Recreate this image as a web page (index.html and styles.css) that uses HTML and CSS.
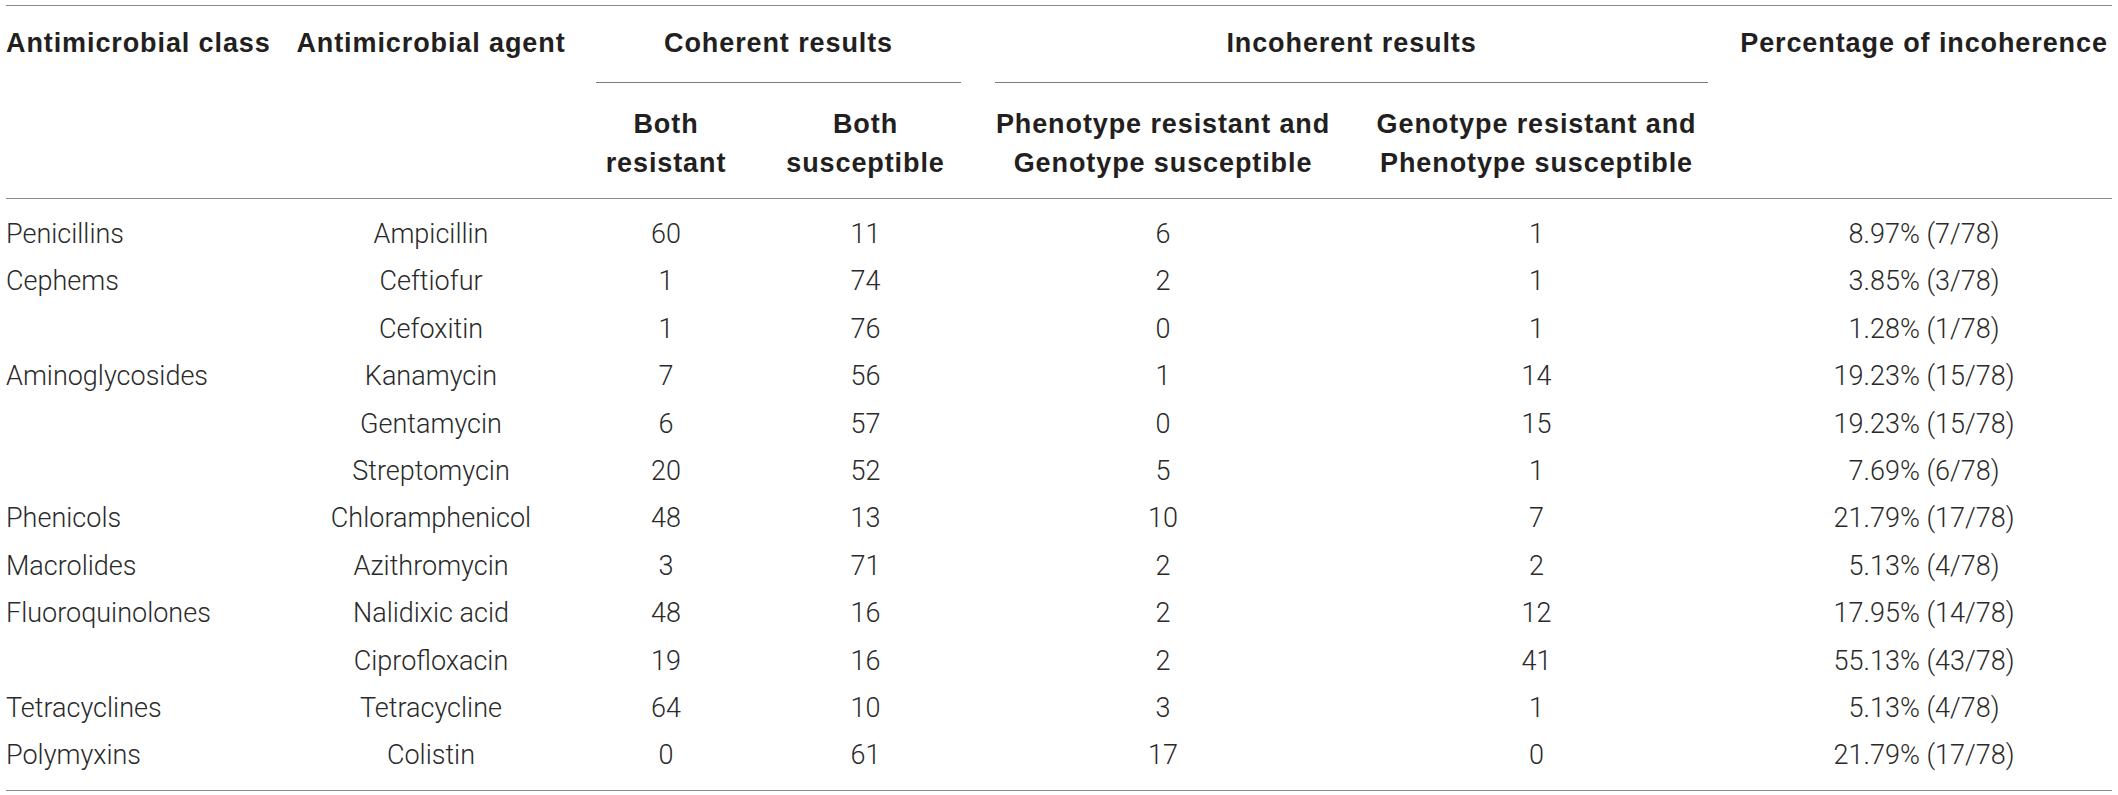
FILE: index.html
```html
<!DOCTYPE html>
<html lang="en">
<head>
<meta charset="utf-8">
<title>Coherence of phenotypic and genotypic resistance</title>
<link rel="stylesheet" href="styles.css">
</head>
<body>
<table class="results">
  <colgroup>
    <col class="c-class">
    <col class="c-agent">
    <col class="c-both-r">
    <col class="c-both-s">
    <col class="c-pheno">
    <col class="c-geno">
    <col class="c-pct">
  </colgroup>
  <thead>
    <tr>
      <th rowspan="2" class="top left">Antimicrobial class</th>
      <th rowspan="2" class="top">Antimicrobial agent</th>
      <th colspan="2" class="group"><span class="group-label">Coherent results</span></th>
      <th colspan="2" class="group"><span class="group-label">Incoherent results</span></th>
      <th rowspan="2" class="top pct">Percentage of incoherence</th>
    </tr>
    <tr>
      <th class="sub">Both<br>resistant</th>
      <th class="sub">Both<br>susceptible</th>
      <th class="sub">Phenotype resistant and<br>Genotype susceptible</th>
      <th class="sub">Genotype resistant and<br>Phenotype susceptible</th>
    </tr>
  </thead>
  <tbody>
    <tr><td class="left">Penicillins</td><td>Ampicillin</td><td>60</td><td>11</td><td>6</td><td>1</td><td class="pct">8.97% (7/78)</td></tr>
    <tr><td class="left">Cephems</td><td>Ceftiofur</td><td>1</td><td>74</td><td>2</td><td>1</td><td class="pct">3.85% (3/78)</td></tr>
    <tr><td class="left"></td><td>Cefoxitin</td><td>1</td><td>76</td><td>0</td><td>1</td><td class="pct">1.28% (1/78)</td></tr>
    <tr><td class="left">Aminoglycosides</td><td>Kanamycin</td><td>7</td><td>56</td><td>1</td><td>14</td><td class="pct">19.23% (15/78)</td></tr>
    <tr><td class="left"></td><td>Gentamycin</td><td>6</td><td>57</td><td>0</td><td>15</td><td class="pct">19.23% (15/78)</td></tr>
    <tr><td class="left"></td><td>Streptomycin</td><td>20</td><td>52</td><td>5</td><td>1</td><td class="pct">7.69% (6/78)</td></tr>
    <tr><td class="left">Phenicols</td><td>Chloramphenicol</td><td>48</td><td>13</td><td>10</td><td>7</td><td class="pct">21.79% (17/78)</td></tr>
    <tr><td class="left">Macrolides</td><td>Azithromycin</td><td>3</td><td>71</td><td>2</td><td>2</td><td class="pct">5.13% (4/78)</td></tr>
    <tr><td class="left">Fluoroquinolones</td><td>Nalidixic acid</td><td>48</td><td>16</td><td>2</td><td>12</td><td class="pct">17.95% (14/78)</td></tr>
    <tr><td class="left"></td><td>Ciprofloxacin</td><td>19</td><td>16</td><td>2</td><td>41</td><td class="pct">55.13% (43/78)</td></tr>
    <tr><td class="left">Tetracyclines</td><td>Tetracycline</td><td>64</td><td>10</td><td>3</td><td>1</td><td class="pct">5.13% (4/78)</td></tr>
    <tr><td class="left">Polymyxins</td><td>Colistin</td><td>0</td><td>61</td><td>17</td><td>0</td><td class="pct">21.79% (17/78)</td></tr>
  </tbody>
</table>
</body>
</html>
```

FILE: styles.css
```css
html, body {
  margin: 0;
  padding: 0;
  background: #ffffff;
}

.results {
  margin: 5px 0 0 6px;
  width: 2106px;
  table-layout: fixed;
  border-collapse: collapse;
  border-top: 1px solid #8a8a8a;
  border-bottom: 1px solid #8a8a8a;
  color: #231f20;
}

.c-class { width: 277px; }
.c-agent { width: 296px; }
.c-both-r { width: 174px; }
.c-both-s { width: 225px; }
.c-pheno { width: 370px; }
.c-geno { width: 377px; }
.c-pct { width: 387px; }

.results th {
  font-family: "Liberation Sans", Arial, sans-serif;
  font-weight: 700;
  font-size: 27px;
  letter-spacing: 0.9px;
  line-height: 39px;
  text-align: center;
  padding: 0;
  white-space: nowrap;
}

.results th.top {
  vertical-align: top;
  padding-top: 18px;
}

.results th.group {
  padding: 0 17px;
  vertical-align: top;
}

.group-label {
  display: block;
  padding: 18px 0 19px;
  border-bottom: 1px solid #7a7a7a;
}

.results th.sub {
  padding: 22px 0 15px;
}

.results tbody {
  border-top: 1px solid #8a8a8a;
}

.results td {
  font-family: Roboto, "Liberation Sans", Arial, sans-serif;
  font-weight: 300;
  font-size: 27px;
  line-height: 47.4px;
  text-align: center;
  padding: 0;
  white-space: nowrap;
  color: #2a2a2a;
}

.results .left {
  text-align: left;
}

.results .pct {
  padding-left: 11px;
}

.results tbody tr:first-child td {
  padding-top: 12px;
}

.results tbody tr:last-child td {
  padding-bottom: 10px;
}
```
